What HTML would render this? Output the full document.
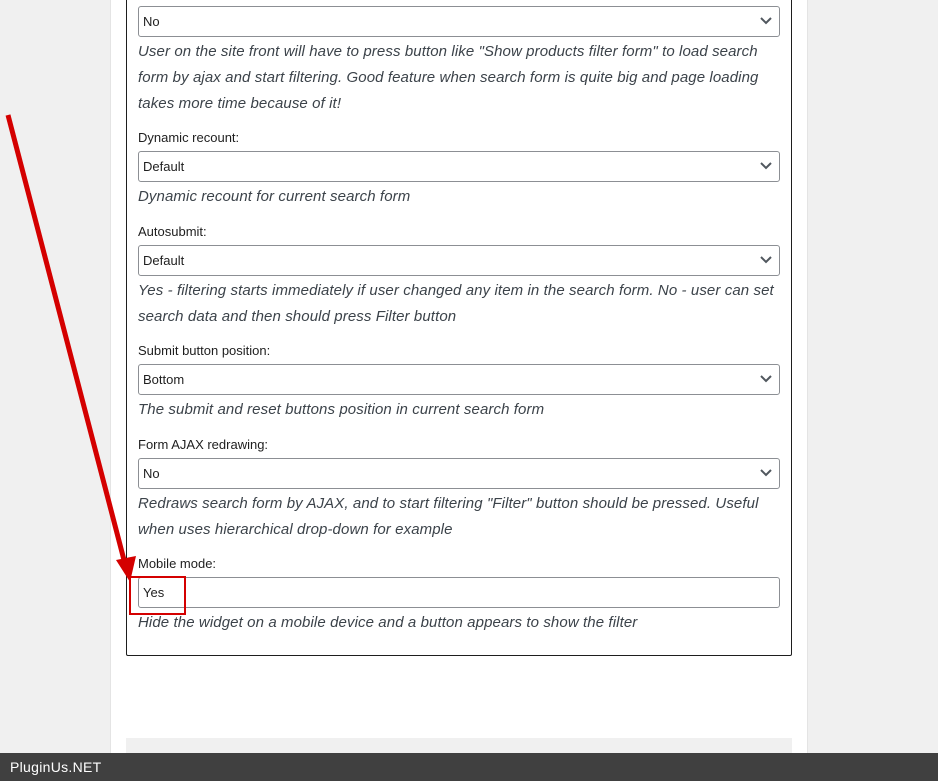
<!DOCTYPE html>
<html><head><style>
*{margin:0;padding:0;box-sizing:border-box}
body{width:938px;height:781px;background:#f0f0f0;position:relative;overflow:hidden;font-family:"Liberation Sans",sans-serif;color:#1e1e1e}
.panel{position:absolute;left:110px;top:0;width:698px;height:781px;background:#fff;border-left:1px solid #e4e4e4;border-right:1px solid #e4e4e4}
.box{position:absolute;left:126px;top:-2px;width:666px;height:658px;border:1px solid #1e1e1e;border-radius:0 0 2px 2px}
.sel{position:absolute;left:138px;width:642px;height:31px;border:1px solid #8c8f94;border-radius:3px;font-size:13px;line-height:29px;padding-left:4px;background:#fff}
.sel svg{position:absolute;right:7px;top:10px}
.lab{position:absolute;left:138px;font-size:13px;top:0}
.d{position:absolute;left:138px;font-size:15px;font-style:italic;line-height:26px;color:#3c434a;width:645px;letter-spacing:0.1px}
.gray{position:absolute;left:126px;top:738px;width:666px;height:20px;background:#f0f0f0}
.foot{position:absolute;left:0;top:753px;width:938px;height:28px;background:#404040;color:#fff;font-size:14px;line-height:28px;padding-left:10px;letter-spacing:.3px}
</style></head><body>
<div class="panel"></div>
<div class="box"></div>
<div class="gray"></div>
<div class="sel" style="top:6px">No<svg width="12" height="8"><path d="M1 1l5 5 5-5" stroke="#50575e" stroke-width="2" fill="none"/></svg></div>
<div class="d" style="top:39px;width:630px">User on the site front will have to press button like "Show products filter form" to load search form by ajax and start filtering. Good feature when search form is quite big and page loading takes more time because of it!</div>
<div class="lab" style="top:130px">Dynamic recount:</div>
<div class="sel" style="top:151px">Default<svg width="12" height="8"><path d="M1 1l5 5 5-5" stroke="#50575e" stroke-width="2" fill="none"/></svg></div>
<div class="d" style="top:184px">Dynamic recount for current search form</div>
<div class="lab" style="top:224px">Autosubmit:</div>
<div class="sel" style="top:245px">Default<svg width="12" height="8"><path d="M1 1l5 5 5-5" stroke="#50575e" stroke-width="2" fill="none"/></svg></div>
<div class="d" style="top:278px">Yes - filtering starts immediately if user changed any item in the search form. No - user can set search data and then should press Filter button</div>
<div class="lab" style="top:343px">Submit button position:</div>
<div class="sel" style="top:364px">Bottom<svg width="12" height="8"><path d="M1 1l5 5 5-5" stroke="#50575e" stroke-width="2" fill="none"/></svg></div>
<div class="d" style="top:397px">The submit and reset buttons position in current search form</div>
<div class="lab" style="top:437px">Form AJAX redrawing:</div>
<div class="sel" style="top:458px">No<svg width="12" height="8"><path d="M1 1l5 5 5-5" stroke="#50575e" stroke-width="2" fill="none"/></svg></div>
<div class="d" style="top:491px">Redraws search form by AJAX, and to start filtering "Filter" button should be pressed. Useful when uses hierarchical drop-down for example</div>
<div class="lab" style="top:556px">Mobile mode:</div>
<div class="sel" style="top:577px">Yes</div>
<div class="d" style="top:610px">Hide the widget on a mobile device and a button appears to show the filter</div>
<div style="position:absolute;left:129px;top:576px;width:57px;height:39px;border:2px solid #d40000"></div>
<svg style="position:absolute;left:0;top:0" width="200" height="600">
<line x1="8" y1="115" x2="124" y2="560" stroke="#d40000" stroke-width="5"/>
<polygon points="116,560 136,556 130,582" fill="#d40000"/>
</svg>
<div class="foot">PluginUs.NET</div>
</body></html>
